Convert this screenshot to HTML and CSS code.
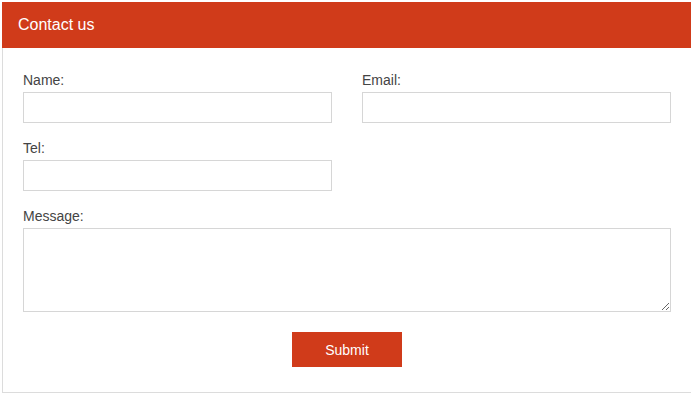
FILE: index.html
```html
<!DOCTYPE html>
<html lang="en">

<head>
  <meta charset="UTF-8">
  <meta name="viewport" content="width=device-width, initial-scale=1.0">
  <title>Contact us</title>
  <link rel="stylesheet" href="styles.css">
</head>

<body>
  <div class="card">
    <div class="card-header">Contact us</div>
    <form class="form">
      <div class="row">
        <div class="field">
          <label for="name">Name:</label>
          <input type="text" id="name">
        </div>
        <div class="field">
          <label for="email">Email:</label>
          <input type="email" id="email">
        </div>
      </div>
      <div class="row">
        <div class="field">
          <label for="tel">Tel:</label>
          <input type="tel" id="tel">
        </div>
      </div>
      <div class="field">
        <label for="message">Message:</label>
        <textarea id="message"></textarea>
      </div>
      <div class="actions">
        <button type="button">Submit</button>
      </div>
    </form>
  </div>
</body>

</html>
```

FILE: styles.css
```css
body {
  font-family: Arial, "Liberation Sans", sans-serif;
  margin: 2px;
}

.card {
  width: 690px;
  box-sizing: border-box;
  border: 1px solid #dcdcdc;
  border-top: none;
}

.card-header {
  background: #d03b1a;
  color: #fff;
  font-size: 16px;
  height: 46px;
  line-height: 46px;
  padding: 0 16px;
  margin: 0 -1px;
}

.form {
  padding: 24px 20px 25px;
}

.row {
  display: grid;
  grid-template-columns: 309px 309px;
  column-gap: 30px;
  margin-bottom: 17px;
}

.field label {
  display: block;
  font-size: 14px;
  line-height: 16px;
  color: #444;
  margin-bottom: 4px;
}

.field input,
.field textarea {
  display: block;
  box-sizing: border-box;
  width: 100%;
  border: 1px solid #d6d6d6;
  margin: 0;
  padding: 4px 6px;
  font-family: inherit;
  font-size: 14px;
  outline: none;
}

.field input {
  height: 31px;
}

.field textarea {
  height: 84px;
}

.actions {
  text-align: center;
  margin-top: 20px;
}

.actions button {
  width: 110px;
  height: 35px;
  border: none;
  background: #d03b1a;
  color: #fff;
  font-family: inherit;
  font-size: 14px;
  cursor: pointer;
}
```
